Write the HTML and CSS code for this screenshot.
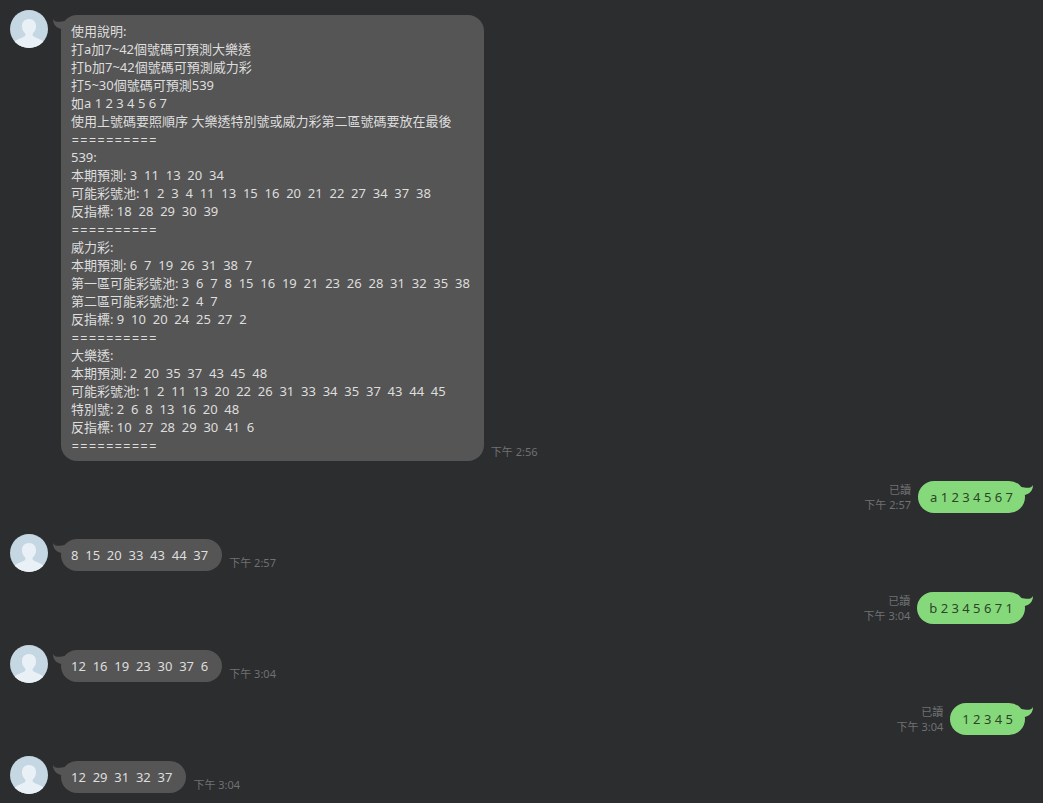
FILE: index.html
```html
<!DOCTYPE html>
<html lang="zh-Hant">
<head>
  <meta charset="UTF-8">
  <meta name="viewport" content="width=device-width, initial-scale=1.0">
  <title>Chat</title>
  <link rel="stylesheet" href="styles.css">
</head>
<body>

  <!-- Shared shapes -->
  <svg class="defs" aria-hidden="true">
    <symbol id="avatar" viewBox="0 0 38 38">
      <clipPath id="round"><circle cx="19" cy="19" r="19"/></clipPath>
      <circle cx="19" cy="19" r="19" fill="#c5d7e2"/>
      <path clip-path="url(#round)" fill="#e9f1f6" d="M19 9C14.600 9 12 12 12 16.200C12 19 13.200 21.500 15 23.200C15.600 24 15.700 25.500 14.800 26.200C12.500 27.800 6.500 29 3.500 32.500V38H34.500V32.500C31.500 29 25.500 27.800 23.200 26.200C22.300 25.500 22.400 24 23 23.200C24.800 21.500 26 19 26 16.200C26 12 23.400 9 19 9Z"/>
    </symbol>
    <symbol id="tail" viewBox="0 0 12 12">
      <path d="M0 0C1.500 3 5 3.500 12 2V11L9 10C4 9.500 0 6 0 0Z"/>
    </symbol>
  </svg>

  <main class="chat">
    <div class="message received">
      <svg class="avatar"><use href="#avatar"/></svg>
      <div class="bubble">
        <svg class="tail"><use href="#tail"/></svg>
        <p>使用說明:</p>
        <p>打a加7~42個號碼可預測大樂透</p>
        <p>打b加7~42個號碼可預測威力彩</p>
        <p>打5~30個號碼可預測539</p>
        <p>如a 1 2 3 4 5 6 7</p>
        <p>使用上號碼要照順序 大樂透特別號或威力彩第二區號碼要放在最後</p>
        <p class="divider">==========</p>
        <p>539:</p>
        <p>本期預測: 3  11  13  20  34</p>
        <p>可能彩號池: 1  2  3  4  11  13  15  16  20  21  22  27  34  37  38</p>
        <p>反指標: 18  28  29  30  39</p>
        <p class="divider">==========</p>
        <p>威力彩:</p>
        <p>本期預測: 6  7  19  26  31  38  7</p>
        <p>第一區可能彩號池: 3  6  7  8  15  16  19  21  23  26  28  31  32  35  38</p>
        <p>第二區可能彩號池: 2  4  7</p>
        <p>反指標: 9  10  20  24  25  27  2</p>
        <p class="divider">==========</p>
        <p>大樂透:</p>
        <p>本期預測: 2  20  35  37  43  45  48</p>
        <p>可能彩號池: 1  2  11  13  20  22  26  31  33  34  35  37  43  44  45</p>
        <p>特別號: 2  6  8  13  16  20  48</p>
        <p>反指標: 10  27  28  29  30  41  6</p>
        <p class="divider">==========</p>
      </div>
      <div class="meta"><time>下午 2:56</time></div>
    </div>

    <div class="message sent">
      <div class="meta"><span>已讀</span><time>下午 2:57</time></div>
      <div class="bubble">
        <svg class="tail"><use href="#tail"/></svg>
        <p>a 1 2 3 4 5 6 7</p>
      </div>
    </div>

    <div class="message received">
      <svg class="avatar"><use href="#avatar"/></svg>
      <div class="bubble">
        <svg class="tail"><use href="#tail"/></svg>
        <p>8  15  20  33  43  44  37</p>
      </div>
      <div class="meta"><time>下午 2:57</time></div>
    </div>

    <div class="message sent">
      <div class="meta"><span>已讀</span><time>下午 3:04</time></div>
      <div class="bubble">
        <svg class="tail"><use href="#tail"/></svg>
        <p>b 2 3 4 5 6 7 1</p>
      </div>
    </div>

    <div class="message received">
      <svg class="avatar"><use href="#avatar"/></svg>
      <div class="bubble">
        <svg class="tail"><use href="#tail"/></svg>
        <p>12  16  19  23  30  37  6</p>
      </div>
      <div class="meta"><time>下午 3:04</time></div>
    </div>

    <div class="message sent">
      <div class="meta"><span>已讀</span><time>下午 3:04</time></div>
      <div class="bubble">
        <svg class="tail"><use href="#tail"/></svg>
        <p>1 2 3 4 5</p>
      </div>
    </div>

    <div class="message received">
      <svg class="avatar"><use href="#avatar"/></svg>
      <div class="bubble">
        <svg class="tail"><use href="#tail"/></svg>
        <p>12  29  31  32  37</p>
      </div>
      <div class="meta"><time>下午 3:04</time></div>
    </div>
  </main>

</body>
</html>
```
FILE: styles.css
```css
* {
  box-sizing: border-box;
  margin: 0;
  padding: 0;
}

body {
  background: #2c2d2f;
  font-family: "Noto Sans", "Noto Sans CJK TC", sans-serif;
  font-size: 13px;
  line-height: 18px;
}

.defs {
  position: absolute;
  width: 0;
  height: 0;
}

.chat {
  padding: 10px 18px 8px 10px;
}

.message {
  display: flex;
  align-items: flex-end;
}

.received {
  margin-bottom: 20px;
}

.sent {
  justify-content: flex-end;
  margin-bottom: 21px;
}

.message:last-child {
  margin-bottom: 0;
}

.avatar {
  flex: none;
  align-self: flex-start;
  width: 38px;
  height: 38px;
  margin-right: 13px;
}

/* Bubbles */
.bubble {
  position: relative;
  border-radius: 16px;
  padding: 7px 12px;
}

.bubble p {
  white-space: pre-wrap;
}

.received .bubble {
  align-self: flex-start;
  margin-top: 5px;
  padding-left: 10px;
  padding-right: 14px;
  background: #555555;
  color: #dedede;
}

.sent .bubble {
  background: #86d97b;
  color: #2b4528;
}

.bubble .divider {
  font-family: Inter, sans-serif;
}

.tail {
  position: absolute;
  top: 4px;
  left: -8px;
  width: 12px;
  height: 12px;
  fill: #555555;
}

.sent .tail {
  left: auto;
  right: -8px;
  fill: #86d97b;
  transform: scaleX(-1);
}

/* Time and read mark */
.meta {
  display: flex;
  flex-direction: column;
  flex: none;
  padding-bottom: 1px;
  color: #707173;
  font-size: 11px;
  line-height: 15px;
}

.received .meta {
  margin-left: 7px;
  padding-bottom: 2px;
}

.sent .meta {
  align-items: flex-end;
  margin-right: 7px;
}
```
